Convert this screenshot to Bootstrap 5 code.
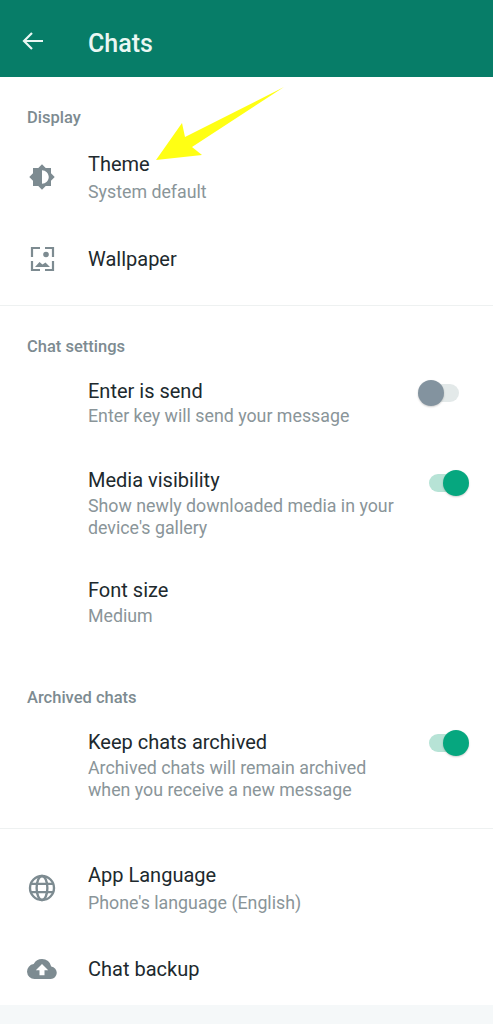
<!doctype html>
<html lang="en"><head><meta charset="utf-8"><title>Chats</title>
<link href="https://cdn.jsdelivr.net/npm/bootstrap@5.3.0/dist/css/bootstrap.min.css" rel="stylesheet">
<style>
html,body{height:1024px;overflow:hidden}
body{font-family:Roboto,"Liberation Sans",sans-serif;background:#fff;color:#1f2b30;position:relative}
.appbar{height:77px;background:#077d68;color:#eaf7f3;padding-left:21px;padding-top:11px}
.appbar svg{width:24px;height:24px;margin-right:43px;margin-top:-7px}
.appbar h1{font-size:25px;font-weight:500;margin:0;line-height:28px}
.grp-label{font-size:16.5px;font-weight:500;color:#7d8b91;line-height:24px;padding-left:27px}
.lead-pad{padding-top:29px}
.item{padding-left:27px;padding-right:24px}
.ico{width:30px;height:30px;margin:-5px 31px -5px 0;flex:none}
.ico-blank{width:61px;flex:none}
.ttl{font-size:20px;line-height:28px;color:#20292d}
.sub{font-size:17.8px;line-height:22px;color:#8a9599}
.sub2{line-height:21.5px}
.rule{height:1px;background:#eef1f1}
.g1{margin-top:1px}.g3{margin-top:3px}
.m18{margin-top:18px}.m20{margin-top:20px}.m28{margin-top:28px}.m29{margin-top:29px}.m32{margin-top:32px}.m38{margin-top:38px}.m39{margin-top:39px}.m41{margin-top:41px}.m42{margin-top:42px}.m59{margin-top:59px}.m22{margin-top:22px}
.tog{width:51px;height:26px;flex:none;position:relative}
.t3{margin-top:3px}.t4{margin-top:4px}.t2{margin-top:2px}
.tog::before{content:"";position:absolute;top:4px;height:18px;border-radius:9px}
.tog::after{content:"";position:absolute;top:0;width:26px;height:26px;border-radius:50%;box-shadow:0 1px 2px rgba(0,0,0,.2)}
.tog-off::before{left:3px;width:38px;background:#e3e9e9}
.tog-off::after{left:0;background:#83939f}
.tog-on::before{left:11px;width:38px;background:#b7e3d6}
.tog-on::after{left:25px;background:#06a77f}
.footband{height:30px;background:#f5f8f9}
.pointer{position:absolute;left:0;top:0;width:493px;height:200px;pointer-events:none}
</style></head>
<body>
<header class="appbar d-flex align-items-center">
<svg viewBox="0 0 24 24" fill="none" stroke="#eaf7f3" stroke-width="2.2"><path d="M22 12H3M11 4l-8 8 8 8"/></svg>
<h1>Chats</h1>
</header>

<section class="lead-pad">
<div class="grp-label">Display</div>
<div class="item d-flex align-items-center m20">
<svg class="ico" viewBox="0 0 24 24"><path fill="#7d8b91" d="M20 8.7V4h-4.7L12 .7 8.7 4H4v4.7L.7 12 4 15.3V20h4.7l3.3 3.3 3.3-3.3H20v-4.7l3.3-3.3L20 8.7zM12 18V6c3.3 0 6 2.7 6 6s-2.7 6-6 6z" transform="translate(1.2 1.2) scale(.9)"/></svg>
<div><div class="ttl">Theme</div><div class="sub g3">System default</div></div>
</div>
<div class="item d-flex align-items-center m42">
<svg class="ico" viewBox="0 0 30 30" fill="none"><path stroke="#7d8b91" stroke-width="2.2" d="M13 4H5v9M18 4h8v9M13 26H5v-9M18 26h8v-9"/><circle cx="19" cy="10.500" r="2.800" fill="#7d8b91"/><path fill="#7d8b91" d="M8 23l4.500-5 3 2.500 3-2 4.500 4.500z"/></svg>
<div class="ttl">Wallpaper</div>
</div>
<div class="rule m32"></div>
</section>

<section class="m29">
<div class="grp-label">Chat settings</div>
<div class="item d-flex m18">
<div class="ico-blank"></div>
<div class="flex-grow-1"><div class="ttl">Enter is send</div><div class="sub">Enter key will send your message</div></div>
<span class="tog tog-off t3"></span>
</div>
<div class="item d-flex m39">
<div class="ico-blank"></div>
<div class="flex-grow-1"><div class="ttl">Media visibility</div><div class="sub sub2 g1">Show newly downloaded media in your<br>device's gallery</div></div>
<span class="tog tog-on t4"></span>
</div>
<div class="item d-flex m38">
<div class="ico-blank"></div>
<div><div class="ttl">Font size</div><div class="sub g1">Medium</div></div>
</div>
</section>

<section class="m59">
<div class="grp-label">Archived chats</div>
<div class="item d-flex m18">
<div class="ico-blank"></div>
<div class="flex-grow-1"><div class="ttl">Keep chats archived</div><div class="sub sub2 g1">Archived chats will remain archived<br>when you receive a new message</div></div>
<span class="tog tog-on t2"></span>
</div>
<div class="rule m28"></div>
</section>

<section>
<div class="item d-flex align-items-center m32">
<svg class="ico" viewBox="0 0 24 24" fill="none" stroke="#7d8b91" stroke-width="1.9"><circle cx="12" cy="12" r="9.6"/><ellipse cx="12" cy="12" rx="4.3" ry="9.6"/><path d="M3 8.700h18M3 15.300h18"/></svg>
<div><div class="ttl">App Language</div><div class="sub g3">Phone's language (English)</div></div>
</div>
<div class="item d-flex align-items-center m41">
<svg class="ico" viewBox="0 0 24 24"><path fill="#7d8b91" d="M19.400 10.040A7.490 7.490 0 0 0 12 4a7.500 7.500 0 0 0-6.650 4.040A6 6 0 0 0 6 20h13a5 5 0 0 0 .4-9.960zM14 13v4h-4v-4H7l5-5 5 5h-3z"/></svg>
<div class="ttl">Chat backup</div>
</div>
</section>
<div class="footband m22"></div>

<svg class="pointer" viewBox="0 0 493 200"><polygon fill="#ffff14" points="156,160 182,123 185,137 284,87 192,147 202,155"/></svg>
<script src="https://cdn.jsdelivr.net/npm/bootstrap@5.3.0/dist/js/bootstrap.bundle.min.js"></script>
</body></html>
